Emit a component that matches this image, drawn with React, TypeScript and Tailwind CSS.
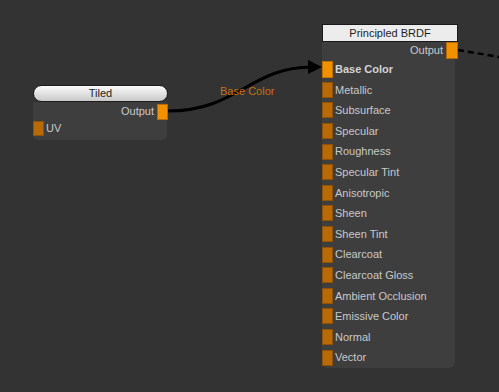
import React from 'react';

const inputs = [
  'Base Color',
  'Metallic',
  'Subsurface',
  'Specular',
  'Roughness',
  'Specular Tint',
  'Anisotropic',
  'Sheen',
  'Sheen Tint',
  'Clearcoat',
  'Clearcoat Gloss',
  'Ambient Occlusion',
  'Emissive Color',
  'Normal',
  'Vector',
];

const font = { fontFamily: '"Liberation Sans", Arial, sans-serif' };

const Wires = () => (
  <svg className="absolute inset-0 pointer-events-none" width={499} height={392}>
    <path d="M168 111 C 238 111, 250 67, 312 67" stroke="#000" strokeWidth={3} fill="none" />
    <polygon points="308,60 322,67 308,74" fill="#000" />
    <path d="M458 50 L 499 57" stroke="#000" strokeWidth={2.5} strokeDasharray="6 4" fill="none" />
  </svg>
);

export default function App() {
  return (
    <div className="relative w-[499px] h-[392px] overflow-hidden bg-[#333333] text-[11px]" style={font}>
      {/* Tiled node */}
      <div className="absolute left-[33px] top-[85px] w-[135px] flex flex-col">
        <div className="h-[17px] rounded-full border border-[#1c1c1c] bg-gradient-to-b from-[#fbfbfb] to-[#c9c9c9] flex items-center justify-center text-[#1e1e1e] text-[11px]">
          Tiled
        </div>
        <div className="w-[134px] h-[38px] bg-[#3e3e3e] rounded-b-[5px] flex flex-col">
          <div className="h-[17px] mt-[1px] flex items-center justify-end">
            <span className="text-[#c9c9c9] mr-[3px]">Output</span>
            <div className="w-[11px] h-[16px] bg-[#f29100] border border-[#b86a00] -mr-[1px]" />
          </div>
          <div className="h-[16px] flex items-center">
            <div className="w-[11px] h-[15px] bg-[#b86a06] border border-[#8f5206]" />
            <span className="text-[#c9c9c9] ml-[2px]">UV</span>
          </div>
        </div>
      </div>

      {/* Principled BRDF node */}
      <div className="absolute left-[322px] top-[24px] w-[136px] flex flex-col">
        <div className="h-[18px] border border-[#1a1a1a] bg-[#ececec] flex items-center justify-center text-[#1e1e1e] text-[11px]">
          Principled BRDF
        </div>
        <div className="w-[133px] h-[326px] bg-[#3e3e3e] rounded-b-[6px] flex flex-col">
          <div className="h-[17px] flex items-center justify-end">
            <span className="text-[#c9c9c9] mr-[3px]">Output</span>
            <div className="w-[12px] h-[17px] bg-[#f29100] border border-[#b86a00] -mr-[3px]" />
          </div>
          {inputs.map((name, i) => (
            <div key={name} className="h-[20.64px] flex items-center">
              <div
                className={
                  i === 0
                    ? 'w-[11px] h-[17px] bg-[#f29100] border border-[#c07200]'
                    : 'w-[11px] h-[16px] bg-[#b86a06] border border-[#8f5206]'
                }
              />
              <span className={i === 0 ? 'ml-[2px] text-[#d4d4d4] font-bold' : 'ml-[2px] text-[#c9c9c9]'}>
                {name}
              </span>
            </div>
          ))}
        </div>
      </div>

      <Wires />

      <div className="absolute left-[220px] top-[83px] text-[#c8700f] text-[11px]">Base Color</div>
    </div>
  );
}
